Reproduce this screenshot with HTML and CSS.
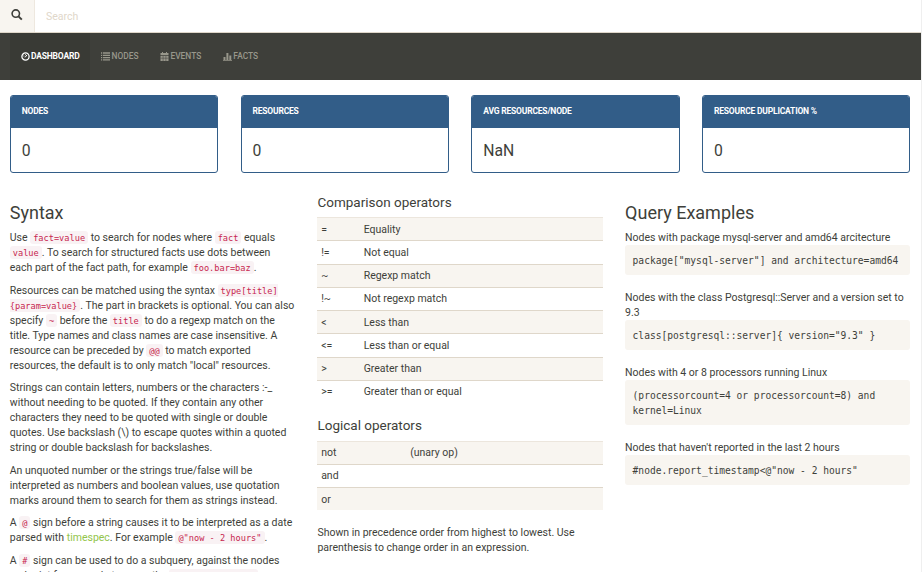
FILE: index.html
```html
<!DOCTYPE html>
<html lang="en">
<head>
<meta charset="utf-8">
<title>Dashboard</title>
<link rel="stylesheet" href="styles.css">
</head>
<body>
<div class="page">
<form class="search">
  <span class="search-addon"><svg width="12" height="12" viewBox="0 0 12 12"><circle cx="4.8" cy="4.6" r="3.7" fill="none" stroke="#3e3f3a" stroke-width="1.6"/><path d="M7.5 7.4L10.8 10.6" stroke="#3e3f3a" stroke-width="2"/></svg></span>
  <input class="search-input" type="text" placeholder="Search">
</form>
<nav class="nav">
  <a class="nav-item active"><svg width="9" height="9" viewBox="0 0 9 9"><circle cx="4.5" cy="4.5" r="3.6" fill="none" stroke="currentColor" stroke-width="1.3"/><path d="M4 5.4L6.1 2.8M2.5 4h.8M4 2.6h.8" stroke="currentColor" fill="none"/></svg><span>Dashboard</span></a>
  <a class="nav-item"><svg width="9" height="9" viewBox="0 0 9 9"><path d="M0 1h1.2M2 1h7M0 3.3h1.2M2 3.3h7M0 5.6h1.2M2 5.6h7M0 7.9h1.2M2 7.9h7" stroke="currentColor" stroke-width="1.3"/></svg><span>Nodes</span></a>
  <a class="nav-item"><svg width="9" height="9" viewBox="0 0 9 9"><path d="M.5 1H2V0h1v1h3V0h1v1h1.5v2h-8zM.5 3.7h8V9h-8z" fill="currentColor"/><path d="M.5 6.2h8M3.1 4v5M5.9 4v5" stroke="#3e3f3a" stroke-width=".5"/></svg><span>Events</span></a>
  <a class="nav-item"><svg width="9" height="9" viewBox="0 0 9 9"><path d="M.5 5h2v3h-2zM3.4 1h2v7h-2zM6.3 3.5h2V8h-2zM0 8h9v.7H0z" fill="currentColor"/></svg><span>Facts</span></a>
</nav>
<main class="content">
  <section class="stats">
    <div class="panel"><div class="panel-head">Nodes</div><div class="panel-body">0</div></div>
    <div class="panel"><div class="panel-head">Resources</div><div class="panel-body">0</div></div>
    <div class="panel"><div class="panel-head">Avg resources/node</div><div class="panel-body">NaN</div></div>
    <div class="panel"><div class="panel-head">Resource duplication %</div><div class="panel-body">0</div></div>
  </section>
  <section class="columns">
    <div class="col syntax">
      <h2>Syntax</h2>
      <p>Use <code>fact=value</code> to search for nodes where <code>fact</code> equals<br><code>value</code>. To search for structured facts use dots between<br>each part of the fact path, for example <code>foo.bar=baz</code>.</p>
      <p>Resources can be matched using the syntax <code>type[title]<br>{param=value}</code>. The part in brackets is optional. You can also<br>specify <code>~</code> before the <code>title</code> to do a regexp match on the<br>title. Type names and class names are case insensitive. A<br>resource can be preceded by <code>@@</code> to match exported<br>resources, the default is to only match "local" resources.</p>
      <p>Strings can contain letters, numbers or the characters :-_<br>without needing to be quoted. If they contain any other<br>characters they need to be quoted with single or double<br>quotes. Use backslash (\) to escape quotes within a quoted<br>string or double backslash for backslashes.</p>
      <p>An unquoted number or the strings true/false will be<br>interpreted as numbers and boolean values, use quotation<br>marks around them to search for them as strings instead.</p>
      <p>A <code>@</code> sign before a string causes it to be interpreted as a date<br>parsed with <a class="link">timespec</a>. For example <code>@"now - 2 hours"</code>.</p>
      <p>A <code>#</code> sign can be used to do a subquery, against the nodes<br>endpoint for example to query the <code>report_timestamp</code></p>
    </div>
    <div class="col">
      <h3>Comparison operators</h3>
      <div class="table">
        <div class="row"><span>=</span><span>Equality</span></div>
        <div class="row"><span>!=</span><span>Not equal</span></div>
        <div class="row"><span>~</span><span>Regexp match</span></div>
        <div class="row"><span>!~</span><span>Not regexp match</span></div>
        <div class="row"><span>&lt;</span><span>Less than</span></div>
        <div class="row"><span>&lt;=</span><span>Less than or equal</span></div>
        <div class="row"><span>&gt;</span><span>Greater than</span></div>
        <div class="row"><span>&gt;=</span><span>Greater than or equal</span></div>
      </div>
      <h3>Logical operators</h3>
      <div class="table logical">
        <div class="row"><span>not</span><span>(unary op)</span></div>
        <div class="row"><span>and</span></div>
        <div class="row"><span>or</span></div>
      </div>
      <p>Shown in precedence order from highest to lowest. Use<br>parenthesis to change order in an expression.</p>
    </div>
    <div class="col">
      <h2>Query Examples</h2>
      <div class="example">Nodes with package mysql-server and amd64 arcitecture<pre>package["mysql-server"] and architecture=amd64</pre></div>
      <div class="example">Nodes with the class Postgresql::Server and a version set to<br>9.3<pre>class[postgresql::server]{ version="9.3" }</pre></div>
      <div class="example">Nodes with 4 or 8 processors running Linux<pre>(processorcount=4 or processorcount=8) and
kernel=Linux</pre></div>
      <div class="example">Nodes that haven't reported in the last 2 hours<pre>#node.report_timestamp&lt;@"now - 2 hours"</pre></div>
    </div>
  </section>
</main>
</div>
</body>
</html>
```
FILE: styles.css
```css
* { box-sizing: border-box; }
html, body { margin: 0; height: 572px; overflow: hidden; }
body {
  background: #fff;
  color: #3e3f3a;
  font: 10.5px/15px Roboto, sans-serif;
}
.page {
  height: 572px;
  margin-right: 1px;
  border-right: 1px solid #efefef;
  overflow: hidden;
}
.search { display: flex; height: 33px; border-bottom: 1px solid #dfd7ca; }
.search-addon {
  width: 35px;
  padding: 9px 0 0 11px;
  background: #f8f5f0;
  border-right: 1px solid #eee8df;
}
.search-addon svg { display: block; }
.search-input {
  flex: 1;
  border: 0;
  outline: 0;
  padding: 0 11px;
  font: 10.5px/15px Roboto, sans-serif;
}
.search-input::placeholder { color: #dfd7ca; opacity: 1; }
.nav {
  display: flex;
  height: 47px;
  padding-left: 10px;
  background: #3e3f3a;
}
.nav-item {
  display: flex;
  align-items: center;
  gap: 1px;
  padding: 0 11px 1px;
  color: #98978b;
  font-size: 8.4px;
  font-weight: 500;
  text-transform: uppercase;
}
.nav-item svg { flex: none; }
.nav-item.active {
  color: #fff;
  background: #393a35;
  font-size: 8.5px;
  font-weight: 700;
  letter-spacing: -0.2px;
}
.content { padding: 15px 10.75px 0 9.75px; }
.stats { display: grid; grid-template-columns: repeat(4, 1fr); gap: 22.5px; }
.panel {
  height: 78px;
  border: 1px solid #325d88;
  border-radius: 3px;
  overflow: hidden;
}
.panel-head {
  height: 32px;
  padding: 8px 11px;
  background: #325d88;
  color: #fff;
  font-size: 8.5px;
  font-weight: 700;
  letter-spacing: -0.2px;
  text-transform: uppercase;
}
.panel-body { padding: 12px 11px; font-size: 15.75px; line-height: 22px; }
.columns { display: grid; grid-template-columns: repeat(3, minmax(0, 1fr)); gap: 22.5px; white-space: nowrap; }
h2, h3 { margin: 0; font-weight: 400; }
h2 { margin: 30px 0 7px; font-size: 18px; line-height: 20px; }
h3 { margin: 21.5px 0 7.5px; font-size: 13.5px; line-height: 15px; }
.table + h3 { margin-top: 15px; }
p { margin: 0 0 7.5px; }
code {
  padding: 1.5px 3px;
  border-radius: 3px;
  background: #f9f2f4;
  color: #c7254e;
  font: 8.65px/1 "DejaVu Sans Mono", monospace;
  vertical-align: 0.5px;
}
.link { color: #93c54b; }
.table { margin-bottom: 15px; }
.row {
  display: grid;
  grid-template-columns: 42.5px 1fr;
  height: 23.25px;
  padding: 3.5px 3.75px;
  border-top: 1px solid #dfd7ca;
}
.row:first-child { border-top-color: #ece6dd; }
.row:nth-child(odd) { background: #f8f5f0; }
.logical .row { grid-template-columns: 89px 1fr; }
pre {
  margin: 0 0 15px;
  padding: 7.5px;
  border-radius: 3px;
  background: #f8f5f0;
  font: 9.6px/15px "DejaVu Sans Mono", monospace;
}
```
